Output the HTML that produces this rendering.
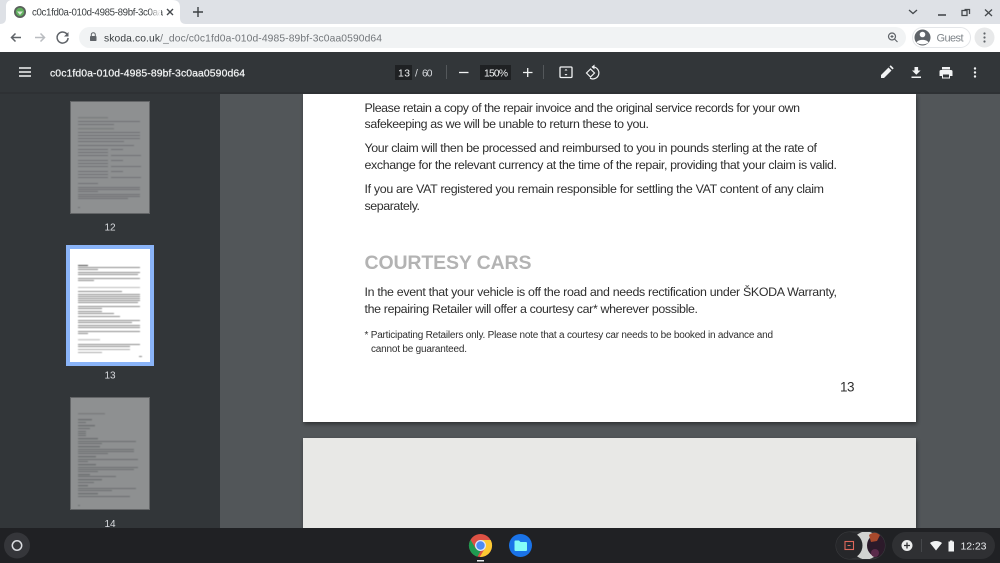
<!DOCTYPE html>
<html><head><meta charset="utf-8"><style>
html,body{margin:0;padding:0;width:1000px;height:563px;overflow:hidden;background:#525659}
svg{display:block;position:absolute;left:0;top:0;filter:blur(.3px)}
text{font-family:"Liberation Sans",sans-serif}
.d{font-size:12.4px;fill:#2e2e2e}
</style></head><body>
<svg width="1000" height="563" viewBox="0 0 1000 563" xmlns="http://www.w3.org/2000/svg">
<defs>
<filter id="s" x="-5%" y="-5%" width="110%" height="115%"><feDropShadow dx="1" dy="2" stdDeviation="2" flood-color="#000" flood-opacity=".45"/></filter>
<filter id="b" x="-5%" y="-5%" width="110%" height="110%"><feGaussianBlur stdDeviation=".45"/></filter>
<linearGradient id="fade"><stop offset="0" stop-color="#fff" stop-opacity="0"/><stop offset="1" stop-color="#fff"/></linearGradient>
<clipPath id="pill"><rect x="836" y="532" width="49" height="27" rx="13.500"/></clipPath>
<g id="lines12" fill="#6f7173">
<rect x="8" y="16" width="30" height="1.400" opacity=".6"/><rect x="8" y="20" width="62" height="1"/><rect x="8" y="23" width="36" height="1"/>
<rect x="8" y="27" width="36" height="1.400" opacity=".6"/><rect x="8" y="31" width="62" height="1"/><rect x="8" y="34" width="62" height="1"/><rect x="8" y="37" width="62" height="1"/><rect x="8" y="40" width="46" height="1"/><rect x="8" y="44" width="56" height="1"/>
<rect x="8" y="48" width="30" height="1"/><rect x="41" y="48" width="12" height="1"/><rect x="8" y="51" width="30" height="1"/><rect x="8" y="54" width="30" height="1"/><rect x="41" y="54" width="30" height="1"/>
<rect x="8" y="59" width="30" height="1"/><rect x="41" y="59" width="12" height="1"/><rect x="8" y="62" width="30" height="1"/><rect x="8" y="65" width="30" height="1"/><rect x="41" y="65" width="30" height="1"/>
<rect x="8" y="70" width="30" height="1"/><rect x="41" y="70" width="12" height="1"/><rect x="8" y="73" width="30" height="1"/><rect x="8" y="76" width="30" height="1"/><rect x="41" y="76" width="30" height="1"/>
<rect x="8" y="82" width="20" height="1"/><rect x="8" y="86" width="62" height="1"/><rect x="8" y="88" width="62" height="1"/><rect x="8" y="90" width="20" height="1"/><rect x="8" y="93" width="62" height="1"/><rect x="8" y="95" width="62" height="1"/><rect x="8" y="97" width="50" height="1"/><rect x="8" y="106" width="2" height="1"/>
</g>
</defs>
<rect width="1000" height="24" fill="#dee1e6"/>
<path d="M0 24C4 24 6 22 6 18V6C6 3 8 0 12 0H172C177 0 180 2 180 7V18C180 22 182 24 186 24Z" fill="#fff"/>
<rect y="24" width="1000" height="28" fill="#fff"/>
<circle cx="20" cy="12" r="6" fill="#5a5f5c"/><circle cx="20" cy="12" r="4.200" fill="#5fae5c"/><path d="M17 11.500h6l-3 3.500z" fill="#d9e8d7"/>
<text x="32" y="15.500" font-size="9.700" fill="#3c4043" textLength="131">c0c1fd0a-010d-4985-89bf-3c0aa</text>
<rect x="148" y="3" width="13" height="18" fill="url(#fade)"/>
<path d="M167 9l6 6M173 9l-6 6" stroke="#45494d" stroke-width="1.400" fill="none"/>
<path d="M198 7v10M193 12h10" stroke="#3c4043" stroke-width="1.400" fill="none"/>
<path d="M909 10l4 3.500 4-3.500" stroke="#45494d" stroke-width="1.300" fill="none"/>
<path d="M938 15h8" stroke="#45494d" stroke-width="1.600"/>
<path d="M962 11v4.500h5v-5h-5zM964.500 9.500h5v4.500" stroke="#45494d" stroke-width="1.300" fill="none"/>
<path d="M985 9.500l7 6.500M992 9.500l-7 6.500" stroke="#45494d" stroke-width="1.300"/>
<path d="M21 37.500H11.500M15.500 33.500l-4 4 4 4" stroke="#5f6368" stroke-width="1.500" fill="none"/>
<path d="M35 37.500h9.500M40.500 33.500l4 4-4 4" stroke="#b9bcc0" stroke-width="1.500" fill="none"/>
<path d="M67.500 35a5.500 5.500 0 1 0 .6 3" stroke="#5f6368" stroke-width="1.500" fill="none"/><path d="M68.500 32v4.500h-4.500z" fill="#5f6368"/>
<rect x="79" y="27" width="827" height="21" rx="10.500" fill="#f1f3f4"/>
<rect x="90" y="36" width="6.500" height="5" rx=".8" fill="#5f6368"/><path d="M91.300 36v-1.300a2 2 0 0 1 4 0V36" stroke="#5f6368" fill="none"/>
<text x="104" y="41.500" font-size="10.300" fill="#72767a" textLength="278"><tspan fill="#3c4043">skoda.co.uk</tspan>/_doc/c0c1fd0a-010d-4985-89bf-3c0aa0590d64</text>
<circle cx="892" cy="36.500" r="3.500" stroke="#5f6368" stroke-width="1.200" fill="none"/><path d="M894.500 39l3 3M890.500 36.500h3M892 35v3" stroke="#5f6368" stroke-width="1.100"/>
<rect x="912.500" y="27.500" width="58" height="20" rx="10" fill="#fff" stroke="#e4e6e9"/>
<circle cx="922.500" cy="37.500" r="8" fill="#5f6368"/><circle cx="922.500" cy="34.500" r="2.800" fill="#fff"/><path d="M916.500 42.500c1.500-3.500 10.500-3.500 12 0-3 2.500-9 2.500-12 0z" fill="#fff"/>
<text x="936.500" y="41.500" font-size="11" fill="#80868b" textLength="27">Guest</text>
<circle cx="984.500" cy="37.500" r="10" fill="#e8e9ea"/><g fill="#5f6368"><circle cx="984.500" cy="33.500" r="1.100"/><circle cx="984.500" cy="37.500" r="1.100"/><circle cx="984.500" cy="41.500" r="1.100"/></g>

<rect y="94" width="1000" height="434" fill="#525659"/>
<rect y="94" width="220" height="434" fill="#323639"/>
<rect x="303" y="94" width="613" height="328" fill="#fff" filter="url(#s)"/>
<rect x="303" y="438" width="613" height="90" fill="#e8e8e6" filter="url(#s)"/>
<rect y="52" width="1000" height="42" fill="#323639"/>
<rect y="92" width="1000" height="2" fill="#2c2f32" opacity=".6"/>
<path d="M19 68h12M19 72h12M19 76h12" stroke="#f1f3f4" stroke-width="1.400"/>
<text x="50" y="76.500" font-size="10.400" fill="#f1f3f4" stroke="#f1f3f4" stroke-width=".25" textLength="195">c0c1fd0a-010d-4985-89bf-3c0aa0590d64</text>
<rect x="395" y="65" width="17" height="15" fill="#1f2123"/>
<text x="398" y="76.500" font-size="10.300" fill="#f1f3f4" textLength="12">13</text>
<text x="415" y="76.500" font-size="10.300" fill="#dadce0">/</text>
<text x="422" y="76.500" font-size="10.300" fill="#dadce0" textLength="10.500">60</text>
<rect x="446" y="65" width="1" height="14" fill="#54585b"/>
<path d="M459 72.500h9.500" stroke="#f1f3f4" stroke-width="1.300"/>
<rect x="480" y="65" width="31" height="15" fill="#1f2123"/>
<text x="484" y="76.500" font-size="10.300" fill="#f1f3f4" textLength="24">150%</text>
<path d="M523 72.500h9.500M527.700 68v9" stroke="#f1f3f4" stroke-width="1.300"/>
<rect x="543" y="65" width="1" height="14" fill="#54585b"/>
<rect x="560" y="67" width="12" height="10.500" rx="1" stroke="#f1f3f4" stroke-width="1.300" fill="none"/><path d="M564.500 70.500l1.500-1.600 1.500 1.600zM564.500 74l1.500 1.600 1.500-1.600z" fill="#f1f3f4"/>
<path d="M592 67a6 6 0 1 1-2 11.200" stroke="#f1f3f4" stroke-width="1.200" fill="none"/><path d="M594.500 64.500v5l-3-2.500z" fill="#f1f3f4"/><path d="M590.500 69l-4 4 4 4 4-4z" stroke="#f1f3f4" stroke-width="1.200" fill="none"/>
<path d="M881 78v-3l7.500-7.500 3 3-7.500 7.500zM889.500 66.500l1.200-1.200 3 3-1.200 1.200z" fill="#f1f3f4"/>
<path d="M914.500 67h3.600v3.500h2.500l-4.300 4.300-4.300-4.300h2.500zM911.500 76.500h9.500v1.500h-9.500z" fill="#f1f3f4"/>
<path d="M942 67h8v2.500h-8zM941 70h10a1.500 1.500 0 0 1 1.500 1.500v4.500h-2.500v2.500h-8V76h-2.500v-4.500A1.500 1.500 0 0 1 941 70z" fill="#f1f3f4"/><rect x="943" y="74.500" width="6" height="3" fill="#323639"/>
<g fill="#f1f3f4"><circle cx="975" cy="68.500" r="1.200"/><circle cx="975" cy="72.500" r="1.200"/><circle cx="975" cy="76.500" r="1.200"/></g>

<rect x="70" y="101" width="80" height="113" fill="#8e9091"/><rect x="70.500" y="101.500" width="79" height="112" fill="none" stroke="#636567"/>
<use href="#lines12" x="70" y="101" filter="url(#b)"/>
<text x="110" y="230.500" font-size="10" fill="#dadce0" text-anchor="middle">12</text>
<rect x="66" y="245" width="88" height="121" fill="#8ab4f8"/>
<rect x="70" y="249" width="80" height="113" fill="#fff"/>
<g fill="#8a8a8a" filter="url(#b)">
<rect x="78" y="265" width="10" height="1" fill="#444"/><rect x="78" y="267" width="62" height="1"/><rect x="78" y="269" width="20" height="1"/><rect x="78" y="272" width="62" height="1"/><rect x="78" y="274" width="60" height="1"/><rect x="78" y="278" width="62" height="1"/><rect x="78" y="280" width="16" height="1"/>
<rect x="78" y="287" width="62" height="1" fill="#bbb"/><rect x="78" y="291" width="44" height="1"/>
<rect x="78" y="294" width="62" height="1"/><rect x="78" y="296" width="62" height="1"/><rect x="78" y="298" width="62" height="1"/><rect x="78" y="300" width="62" height="1"/><rect x="78" y="302" width="60" height="1"/>
<rect x="78" y="306" width="62" height="1"/><rect x="78" y="308" width="24" height="1"/><rect x="78" y="311" width="24" height="1"/><rect x="78" y="313" width="36" height="1"/><rect x="78" y="316" width="42" height="1"/>
<rect x="78" y="320" width="62" height="1"/><rect x="78" y="322" width="54" height="1"/><rect x="78" y="325" width="62" height="1"/><rect x="78" y="327" width="62" height="1"/><rect x="78" y="331" width="62" height="1"/><rect x="78" y="333" width="10" height="1"/>
<rect x="78" y="339" width="22" height="1.500" fill="#ccc"/><rect x="78" y="344" width="62" height="1"/><rect x="78" y="346" width="52" height="1"/><rect x="78" y="349" width="52" height="1" fill="#aaa"/><rect x="78" y="352" width="24" height="1" fill="#aaa"/><rect x="139" y="356" width="3" height="1"/>
</g>
<text x="110" y="378.500" font-size="10" fill="#dadce0" text-anchor="middle">13</text>
<rect x="70" y="397" width="80" height="113" fill="#8e9091"/><rect x="70.500" y="397.500" width="79" height="112" fill="none" stroke="#636567"/>
<g fill="#6c6e70" filter="url(#b)">
<rect x="78" y="413" width="27" height="1.400" fill="#7a7c7e"/><rect x="78" y="419" width="14" height="1.300"/><rect x="78" y="422" width="8" height="1"/><rect x="78" y="425" width="17" height="1.300"/><rect x="78" y="428" width="12" height="1"/><rect x="78" y="431" width="8" height="1"/><rect x="78" y="433" width="8" height="1"/><rect x="78" y="435" width="8" height="1"/>
<rect x="78" y="438" width="20" height="1.300"/><rect x="78" y="441" width="58" height="1"/><rect x="78" y="443" width="24" height="1"/><rect x="78" y="446" width="22" height="1.300"/><rect x="78" y="449" width="56" height="1"/><rect x="78" y="451" width="56" height="1"/><rect x="78" y="453" width="30" height="1"/>
<rect x="78" y="456" width="18" height="1.300"/><rect x="78" y="459" width="60" height="1"/><rect x="78" y="461" width="10" height="1"/><rect x="78" y="464" width="18" height="1.300"/><rect x="78" y="467" width="60" height="1"/><rect x="78" y="469" width="56" height="1"/><rect x="78" y="471" width="20" height="1"/>
<rect x="78" y="474" width="12" height="1.300"/><rect x="78" y="476" width="38" height="1"/><rect x="78" y="479" width="24" height="1.300"/><rect x="78" y="482" width="16" height="1"/><rect x="78" y="485" width="10" height="1.300"/><rect x="78" y="488" width="58" height="1"/><rect x="78" y="490" width="34" height="1"/><rect x="78" y="493" width="20" height="1.300"/><rect x="78" y="496" width="52" height="1"/><rect x="78" y="505" width="2" height="1"/>
</g>
<text x="110" y="527" font-size="10" fill="#dadce0" text-anchor="middle">14</text>

<g>
<text class="d" x="364.500" y="112" textLength="435.500">Please retain a copy of the repair invoice and the original service records for your own</text>
<text class="d" x="364.500" y="128" textLength="284.500">safekeeping as we will be unable to return these to you.</text>
<text class="d" x="364.500" y="152" textLength="452.500">Your claim will then be processed and reimbursed to you in pounds sterling at the rate of</text>
<text class="d" x="364.500" y="169" textLength="472.500">exchange for the relevant currency at the time of the repair, providing that your claim is valid.</text>
<text class="d" x="364.500" y="193" textLength="459.500">If you are VAT registered you remain responsible for settling the VAT content of any claim</text>
<text class="d" x="364.500" y="210" textLength="55.500">separately.</text>
<text x="364.500" y="269" font-size="19.500" font-weight="bold" fill="#b3b3b3" textLength="167">COURTESY CARS</text>
<text class="d" x="364.500" y="296" textLength="472.500">In the event that your vehicle is off the road and needs rectification under ŠKODA Warranty,</text>
<text class="d" x="364.500" y="313" textLength="333.500">the repairing Retailer will offer a courtesy car* wherever possible.</text>
<text x="364.500" y="338" font-size="10" fill="#2e2e2e" textLength="408.500">* Participating Retailers only. Please note that a courtesy car needs to be booked in advance and</text>
<text x="371" y="352" font-size="10" fill="#2e2e2e" textLength="96">cannot be guaranteed.</text>
<text x="840" y="391.500" font-size="13.500" fill="#2e2e2e" textLength="14.500">13</text>
</g>

<rect y="528" width="1000" height="35" fill="#202124"/>
<circle cx="17" cy="545.500" r="13" fill="#35363a"/><circle cx="17" cy="545.500" r="4.700" stroke="#dadce0" stroke-width="1.500" fill="none"/>
<circle cx="480.500" cy="545.500" r="11.500" fill="#dd5144"/>
<path d="M470.500 551.300a11.500 11.500 0 0 1 0-11.600l5 8.600 5 3-3 5.500a11.500 11.500 0 0 1-7-5.500z" fill="#1e9a50"/>
<path d="M480.500 540h10.200a11.500 11.500 0 0 1-10.900 17l5-8.500z" fill="#fcc934"/>
<circle cx="480.500" cy="545.500" r="5.500" fill="#dfe7fb"/><circle cx="480.500" cy="545.500" r="4.200" fill="#4c8bf5"/>
<rect x="477" y="560" width="7" height="1.500" fill="#e8eaed"/>
<circle cx="520.500" cy="545.500" r="11.500" fill="#1a73e8"/>
<path d="M514.500 541.500a1 1 0 0 1 1-1h3.500l1.500 1.500h5.500a1 1 0 0 1 1 1v7a1 1 0 0 1-1 1h-10.500a1 1 0 0 1-1-1z" fill="#84fbf8"/>
<rect x="836" y="532" width="49" height="27" rx="13.500" fill="#2b2c2f" stroke="#3a3b3e"/>
<g clip-path="url(#pill)">
<circle cx="866" cy="545.500" r="14" fill="#d2d3d1"/>
<circle cx="849" cy="545.500" r="13.500" fill="#26272a"/>
<circle cx="879" cy="545.500" r="12" fill="#2c1a2a"/>
<path d="M869 535c3-3 8-3 11 0l-3 6-6 1z" fill="#a8492c"/>
<circle cx="875" cy="553" r="4" fill="#5a2a4a"/>
</g>
<rect x="845" y="541.500" width="8.500" height="8" fill="none" stroke="#e0685c" stroke-width="1.100"/><path d="M847.500 545.500h3" stroke="#e0685c"/>
<rect x="892" y="532" width="103" height="27" rx="13.500" fill="#2f3033"/>
<circle cx="907" cy="545.500" r="5.500" fill="#eceded"/><path d="M907 542.500v6M904 545.500h6" stroke="#2f3033" stroke-width="1.300"/>
<rect x="921" y="539" width="1" height="13" fill="#46484b"/>
<path d="M930 542.500a10 10 0 0 1 12 0l-6 7.500z" fill="#f1f3f4" transform="translate(0,.5)"/>
<path d="M948.500 541.500h1.500v-1h2.500v1h1.500v10h-5.500z" fill="#f1f3f4"/>
<text x="960.500" y="549.500" font-size="10.500" fill="#e8eaed" textLength="26">12:23</text>
</svg>
</body></html>
